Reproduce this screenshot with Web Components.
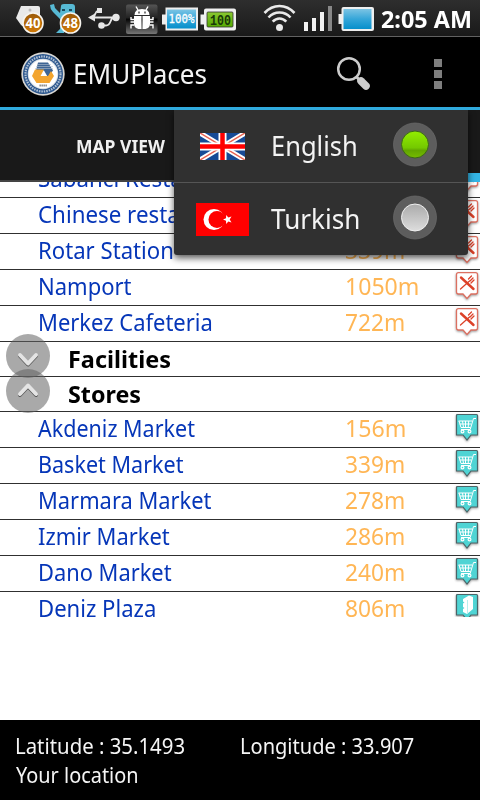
<!DOCTYPE html>
<html lang="en">
<head>
<meta charset="utf-8">
<title>EMUPlaces</title>
<style>
html,body{margin:0;padding:0;background:#fff}
body{width:480px;height:800px;overflow:hidden;font-family:"Noto Sans","Open Sans",sans-serif}
</style>
</head>
<body>
<places-app></places-app>
<script>
const define=(name,html)=>customElements.define(name,class extends HTMLElement{
  constructor(){super();this.attachShadow({mode:'open'})}
  connectedCallback(){this.shadowRoot.innerHTML=typeof html==='function'?html(this):html}
});

/* One line of text, condensed so that its glyphs span the given width. */
const ctx=document.createElement('canvas').getContext('2d');
define('fit-text',el=>{
  const size=+el.getAttribute('size')||24,weight=el.getAttribute('weight')||400;
  ctx.font=`${weight} ${size*10}px "Noto Sans"`;
  const m=ctx.measureText(el.textContent),ink=(m.actualBoundingBoxRight+m.actualBoundingBoxLeft)/10;
  const k=el.hasAttribute('w')?el.getAttribute('w')/ink:.93;
  return `<style>:host{display:block;flex:none;width:${m.width/10*k}px;font:${weight} ${size}px/32px "Noto Sans","Open Sans",sans-serif;white-space:nowrap}
  span{display:inline-block;transform-origin:0 50%;transform:scaleX(${k})}</style><span><slot></slot></span>`;
});

define('status-bar',`<style>
:host{display:block;height:36px;background:linear-gradient(#2e2e2e,#191919);border-bottom:1px solid #626262;color:#fff}
div{display:flex;height:36px}svg{display:block;flex:none}fit-text{margin:3px 0 0 .7px}
text{font-family:"Noto Sans",sans-serif;font-weight:700;fill:#fff}
</style><div>
<svg width="380" height="36" viewBox="0 0 380 36">
<defs><linearGradient id="b" x2="0" y2="1"><stop stop-color="#7cc4e4"/><stop offset=".5" stop-color="#35a6d9"/><stop offset="1" stop-color="#078fcb"/></linearGradient>
<linearGradient id="g" x2="0" y2="1"><stop stop-color="#8bc832"/><stop offset="1" stop-color="#55aa00"/></linearGradient>
<linearGradient id="o" x2="0" y2="1"><stop stop-color="#9b5a08"/><stop offset="1" stop-color="#d17a08"/></linearGradient>
<linearGradient id="k" x2="0" y2="1"><stop stop-color="#555"/><stop offset=".45" stop-color="#222"/><stop offset=".5" stop-color="#050505"/><stop offset="1" stop-color="#777"/></linearGradient></defs>
<path d="M21 6h17q2 0 2 2v20H25l-4-3-5-7z" fill="#e9e9e9"/><circle cx="30" cy="10" r="1.500" fill="#bbb"/>
<circle cx="33" cy="23" r="10" fill="url(#o)" stroke="#f7f4ee" stroke-width="1.600"/><text x="33" y="28.200" font-size="14" text-anchor="middle" textLength="15" lengthAdjust="spacingAndGlyphs">40</text>
<path d="M50 5l4-1 1 4 5 5 1-7q0-2 3-2h8q3 0 3 3v14H62v6l2 2v4h-8l4-4V19l-7-7q-3-3-3-7z" fill="#57b9d4"/><path d="M62 10h3m4 0h3" stroke="#18495c" stroke-width="2"/>
<circle cx="70.500" cy="23" r="10" fill="url(#o)" stroke="#f7f4ee" stroke-width="1.600"/><text x="70.500" y="28.200" font-size="14" text-anchor="middle" textLength="15" lengthAdjust="spacingAndGlyphs">48</text>
<g fill="none" stroke="#e6e6e6" stroke-width="1.800"><path d="M92 17.500h24M93 17.500q1 0 2-3t3-4M104 25.500h2q3 0 4.500-4t3.500-4"/></g>
<path d="M88 17.500l7-4v8zM97 8h5v5h-5z" fill="#e6e6e6"/><circle cx="116" cy="17.500" r="3.700" fill="#e6e6e6"/><circle cx="101.500" cy="25.500" r="3.300" fill="#e6e6e6"/>
<rect x="126" y="4.500" width="31.500" height="29.500" rx="2" fill="url(#k)"/>
<path d="M134.500 15q0-6 7.500-6t7.500 6zM134 16h7.500v13h-3q-4.500-1-4.500-5zM142.500 16h7.500v8q0 4-4.500 5h-3z" fill="#fff"/>
<path d="M138 10l-2-3.500M146 10l2-3.500M134 19.500h-3V17M134 22h-3.500M134 25h-3v3.500M150 19.500h3V17M150 22h3.500M150 25h3v3.500" stroke="#fff" stroke-width="1.400" fill="none"/><path d="M139 11.500v2m6-2v2" stroke="#333" stroke-width="1.300"/>
<path d="M162 14.500h3.500v-7H198v23h-32.500v-6H162z" fill="#eee"/><rect x="167" y="9.500" width="29" height="19" fill="url(#b)"/>
<text x="181.500" y="23.200" text-anchor="middle" style="font:400 12px 'DejaVu Sans Mono',monospace;stroke:#fff;stroke-width:.3" textLength="26" lengthAdjust="spacingAndGlyphs">100%</text>
<path d="M200.500 14.500h3.500v-4q0-2 2-2h28q2 0 2 2v18q0 2-2 2h-28q-2 0-2-2v-4h-3.500z" fill="#f0f0f0"/><rect x="207" y="12" width="26" height="15" rx="1" fill="url(#g)" stroke="#303030" stroke-width=".8"/>
<text x="220.500" y="24.500" text-anchor="middle" style="font:700 14px 'Liberation Mono',monospace;fill:#183808" textLength="21" lengthAdjust="spacingAndGlyphs">100</text>
<g fill="none" stroke="#e9e9e9" stroke-width="2.600"><path d="M264.500 13Q271 6 279.500 6T294.500 13"/><path d="M268.500 17.500q4.500-5 11-5t11 5"/><path d="M272.700 21.700q3-3.200 6.800-3.200t6.800 3.200"/></g><circle cx="279.500" cy="27.500" r="3.500" fill="#e9e9e9"/>
<path d="M304 22h4v9h-4zM312 18h4v13h-4zM320 12h4v19h-4z" fill="#f2f2f2"/><path d="M328 6h4v25h-4z" fill="#888"/>
<path d="M338.500 14h3V9q0-2 2-2H372q2 0 2 2v20q0 2-2 2h-28.500q-2 0-2-2v-5h-3z" fill="#eee"/><rect x="343.500" y="9" width="28" height="20" fill="url(#b)"/>
</svg><fit-text size="24" weight="700" w="88">2:05 AM</fit-text></div>`);

define('action-bar',`<style>
:host{display:block;height:70px;background:#000;border-bottom:3px solid #30aadd;color:#f3f3f3}
div{display:grid;grid-template-columns:51.600px 263.400px 97px 10px;padding-left:21px;align-items:center;height:70px}svg{display:block}
svg,fit-text{margin-top:4px}
</style><div>
<svg width="44" height="44" viewBox="0 0 44 44"><circle cx="22" cy="22" r="21.700" fill="#d9d7d3"/><circle cx="22" cy="22" r="20" fill="#2b568d"/><circle cx="22" cy="22" r="17.500" fill="none" stroke="#b2c2d5" stroke-width="2.200" stroke-dasharray="1.500 1"/><circle cx="22" cy="22" r="15.300" fill="#d8e0e8"/><circle cx="22" cy="22" r="14.300" fill="#fff"/>
<path d="M17 10.500h10l5 8-5 7-4-7h-8z" fill="#3f6594"/><path d="M16 12.500h14M15 14.500h17M14 16.500h18" stroke="#b1c0d0" stroke-width=".6"/><path d="M14 17.500h9l-3.500 6.500h7.500l3-5 3 5-4.500 7H15.500l-4.500-7z" fill="#f3a52f"/><path d="M18.500 33.500h8" stroke="#777" stroke-width="1.800" stroke-dasharray="1.300 .7"/></svg>
<fit-text size="27" w="130.500">EMUPlaces</fit-text>
<svg width="35" height="36" viewBox="0 0 35 36"><circle cx="13" cy="13" r="10.800" fill="none" stroke="#ccc" stroke-width="2.500"/><path d="M20.300 20.800l3 3" stroke="#ccc" stroke-width="3"/><path d="M25 25l5 5" stroke="#ccc" stroke-width="7.600" stroke-linecap="round"/></svg>
<svg width="10" height="30" viewBox="0 0 10 30"><path d="M1 0h8v8H1zM1 11h8v8H1zM1 22h8v8H1z" fill="#7e7e7e"/></svg>
</div>`);

define('tab-bar',el=>`<style>
:host{display:flex;height:72px;box-sizing:border-box;background:#191919;border-bottom:2px solid #444;color:#f0f0f0;position:relative}
.tab{width:240px;display:flex;align-items:center;justify-content:center;padding-top:2px;box-sizing:border-box}
.active{position:absolute;right:0;top:63px;width:240px;height:9px;background:#33b5e5}
</style><div class="tab"><fit-text size="18" weight="700" w="87.500">${el.textContent}</fit-text></div><div class="active"></div>`);

const pins={
food:`<path d="M3.500 2.600h17q2 0 2 2v17.400q0 2-2 2H16l-4 4.500L8 24H3.500q-2 0-2-2V4.600q0-2 2-2z" fill="#fff" stroke="#dc7061" stroke-width="1.300"/><path d="M6 7.500l12.500 11.500" stroke="#dc4128" stroke-width="2.400" stroke-linecap="round"/><path d="M5.500 19l9-8M13.500 9l3-3M16 13l3-3M15 11l3-3" stroke="#dc4128" stroke-width="1.300" fill="none" stroke-linecap="round"/>`,
cart:`<path d="M2.500 2.500h19q1 0 1 1V23H16l-4 5-4-5H1.500V3.500q0-1 1-1z" fill="#4fd4d4" stroke="#4c6467" stroke-width="1.200"/><path d="M21 6.500h-2.500l-3.300 11H6M3.500 9h13.500M4 9l2 6.500h9.500M4.700 12h11.500M7.500 9l1 6.500M10.500 9v6.500M13.700 9l-.5 6.500" fill="none" stroke="#fff" stroke-width="1"/><g fill="none" stroke="#fff" stroke-width="1.200"><circle cx="7.500" cy="19.500" r="1.400"/><circle cx="14.500" cy="19.500" r="1.400"/></g>`,
book:`<path d="M2.500 2.500h19q1 0 1 1V23H16l-4 5-4-5H1.500V3.500q0-1 1-1z" fill="#4fd4d4" stroke="#4c6467" stroke-width="1.200"/><path d="M8 7l6-3.500 4 1.500v12l-6 5-4-2v-3l1.500-1L8 15v-3.500l1.500-1L8 9.500z" fill="#fff"/><path d="M12.500 8v13" stroke="#b9eeee"/>`};
define('map-pin',el=>`<style>:host{display:block;width:24px;height:31px}svg{display:block;filter:drop-shadow(0 1px 1px #0006)}</style><svg width="24" height="31" viewBox="0 0 24 31">${pins[el.getAttribute('kind')]}</svg>`);

define('place-row',el=>{
  const w=el.getAttribute('w'),dist=el.getAttribute('dist');
  return `<style>
:host{display:grid;grid-template-columns:307px 110.300px 24px;height:35px;padding-left:37.700px;border-bottom:1px solid #303030;overflow:hidden}
.name{color:#0636b8}.dist{color:#ffb655}
</style><fit-text class="name" size="24" ${w?`w="${w}"`:''}>${el.getAttribute('name')}</fit-text>
${dist?`<fit-text class="dist" size="24" w="${dist.length>4?70.5:57.5}">${dist}</fit-text>`:'<span></span>'}
<map-pin kind="${el.getAttribute('kind')}"></map-pin>`});

define('group-header',el=>{
  const open=el.hasAttribute('open'),d=open?'M14 26l8-8.500 8 8.500':'M14 18l8 8.500 8-8.500';
  return `<style>
:host{display:flex;align-items:center;height:34px;border-bottom:1px solid #303030;padding-left:6px;color:#000}
svg{display:block;flex:none;margin:-8px 17.600px -2px 0;position:relative}
</style><svg width="44" height="44" viewBox="0 0 44 44"><circle cx="22" cy="22" r="22" fill="#606060" fill-opacity=".54"/><g fill="none" stroke-linecap="round" stroke-linejoin="round" stroke-width="4" transform="translate(0 ${open?-1:3})"><path d="${d}" stroke="#555" transform="translate(0 1)"/><path d="${d}" stroke="#e4e4e4"/></g></svg>
<fit-text size="24" weight="700" w="${el.getAttribute('w')}">${el.textContent}</fit-text>`});

define('place-list',`<style>:host{display:block;height:435px;overflow:hidden;background:#fff}div{margin-top:-20px}</style><div><slot></slot></div>`);

define('menu-option',el=>{
  const on=el.hasAttribute('on');
  return `<style>
:host{display:flex;align-items:center;height:72px;color:#f3f3f3}
.flag{width:75px;margin-left:11px;display:flex;justify-content:center}svg{display:block;flex:none}
.label{width:121px;padding-left:10.500px;box-sizing:border-box}
.radio{margin-top:-3px;margin-left:12px}
</style><div class="flag"><slot name="flag"></slot></div><div class="label"><fit-text size="27" w="${el.getAttribute('w')}">${el.textContent.trim()}</fit-text></div>
<svg class="radio" width="44" height="45" viewBox="0 0 44 45"><defs><linearGradient id="r" x2="0" y2="1">${on?'<stop stop-color="#93ee00"/><stop offset=".62" stop-color="#74c900"/><stop offset=".72" stop-color="#62a600"/><stop offset="1" stop-color="#76bc00"/>':'<stop stop-color="#aaa"/><stop offset="1" stop-color="#ddd"/>'}</linearGradient></defs><circle cx="22" cy="22.500" r="21.500" fill="#5d5d5d" stroke="#6d6d6d" stroke-width=".7"/><circle cx="22" cy="22.500" r="13.500" fill="url(#r)" stroke="${on?'#3c641c':'#f0f0f0'}" stroke-width="1"/></svg>`});

define('language-menu',`<style>
:host{position:absolute;z-index:2;left:174px;top:110px;width:294px;height:145px;background:#303030;border-radius:0 0 3px 3px;box-shadow:0 3px 7px #000a;clip-path:inset(0 -12px -20px -12px)}
.line{height:1px;background:#555}svg{display:block}
</style><menu-option on w="82.500"><svg slot="flag" width="45" height="27" viewBox="0 0 45 27"><path d="M0 0h45v27H0z" fill="#164a96"/><path d="M0 0l45 27M45 0L0 27" stroke="#fff" stroke-width="5"/><path d="M0 0l45 27M45 0L0 27" stroke="#e8604f" stroke-width="1.500"/><path d="M22.500 0v27M0 13.500h45" stroke="#fff" stroke-width="8"/><path d="M22.500 0v27M0 13.500h45" stroke="#f00" stroke-width="4.500"/></svg>English</menu-option>
<div class="line"></div>
<menu-option w="87.500"><svg slot="flag" width="53" height="33" viewBox="0 0 53 33"><path d="M0 0h53v33H0z" fill="#f00"/><circle cx="18" cy="16.500" r="10.500" fill="#fff"/><circle cx="21" cy="16.500" r="8.500" fill="#f00"/><path d="M27 16.500l3-1.200.2-3.300 2.100 2.500 3.200-.9-1.800 2.900 1.800 2.900-3.200-.9-2.100 2.500-.2-3.300z" fill="#fff"/></svg>Turkish</menu-option>`);

define('location-bar',`<style>
:host{display:grid;grid-template-columns:224.500px 1fr;grid-template-rows:29px 29px;height:70px;padding:10px 0 0 15px;background:#000;color:#f5f5f5;margin-top:auto}
fit-text{margin-top:-1px}.you{margin-left:1px}
</style><fit-text size="22" w="167">Latitude : 35.1493</fit-text><fit-text size="22" w="171.500">Longitude : 33.907</fit-text><fit-text class="you" size="22" w="121">Your location</fit-text>`);

define('places-app',`<style>:host{display:flex;flex-direction:column;position:relative;width:480px;height:800px;background:#fff;overflow:hidden}</style>
<status-bar></status-bar><action-bar></action-bar><tab-bar>MAP VIEW</tab-bar>
<place-list>
<place-row name="Sabanci Restaurant" kind="food"></place-row>
<place-row name="Chinese restaurant" kind="food"></place-row>
<place-row name="Rotar Station" w="132" dist="339m" kind="food"></place-row>
<place-row name="Namport" w="91" dist="1050m" kind="food"></place-row>
<place-row name="Merkez Cafeteria" w="171" dist="722m" kind="food"></place-row>
<group-header w="100">Facilities</group-header>
<group-header w="71" open>Stores</group-header>
<place-row name="Akdeniz Market" w="156.500" dist="156m" kind="cart"></place-row>
<place-row name="Basket Market" w="143" dist="339m" kind="cart"></place-row>
<place-row name="Marmara Market" w="171" dist="278m" kind="cart"></place-row>
<place-row name="Izmir Market" w="130.500" dist="286m" kind="cart"></place-row>
<place-row name="Dano Market" w="131" dist="240m" kind="cart"></place-row>
<place-row name="Deniz Plaza" w="114.500" dist="806m" kind="book"></place-row>
</place-list>
<language-menu></language-menu><location-bar></location-bar>`);
</script>
</body>
</html>
